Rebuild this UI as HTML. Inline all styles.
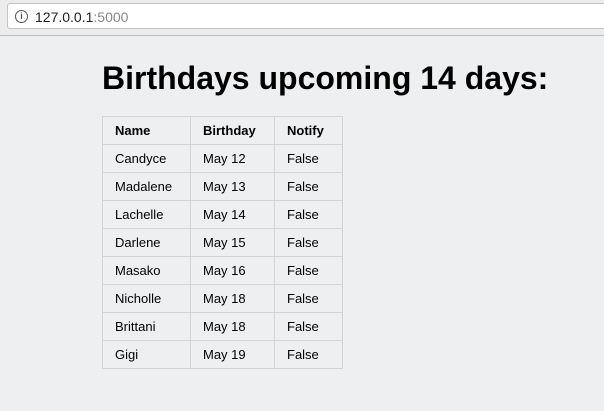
<!DOCTYPE html>
<html><head><style>
body{margin:0;width:604px;height:411px;background:#eeeff1;font-family:"Liberation Sans",Arial,sans-serif;overflow:hidden;position:relative}
.bar{position:absolute;left:0;top:0;width:604px;height:35px;background:#ececec;border-bottom:1px solid #bdbdbd}
.url{position:absolute;left:7px;top:3px;width:620px;height:26px;background:#fff;border:1px solid #c3c3c3;border-radius:3px;box-sizing:border-box}
.url .t{position:absolute;left:27px;top:5px;font-size:14px;color:#222}
.url .t span{color:#888}
.ic{position:absolute;left:7px;top:6px;width:11px;height:11px;border:1.5px solid #555;border-radius:50%;font-size:9px;font-weight:bold;text-align:center;line-height:11px;color:#555}
h1{position:absolute;left:102px;top:60px;margin:0;font-size:32px;font-weight:bold;color:#000}
table{position:absolute;left:102px;top:116px;border-collapse:collapse;font-size:13px}
td,th{border:1px solid #d4d4d4;height:28px;padding:0 0 0 12px;text-align:left;box-sizing:border-box}
th{font-weight:bold}
</style></head><body>
<div class="bar"><div class="url"><div class="ic">i</div><div class="t">127.0.0.1<span>:5000</span></div></div></div>
<h1>Birthdays upcoming 14 days:</h1>
<table>
<tr><th style="width:88px">Name</th><th style="width:84px">Birthday</th><th style="width:68px">Notify</th></tr>
<tr><td>Candyce</td><td>May 12</td><td>False</td></tr>
<tr><td>Madalene</td><td>May 13</td><td>False</td></tr>
<tr><td>Lachelle</td><td>May 14</td><td>False</td></tr>
<tr><td>Darlene</td><td>May 15</td><td>False</td></tr>
<tr><td>Masako</td><td>May 16</td><td>False</td></tr>
<tr><td>Nicholle</td><td>May 18</td><td>False</td></tr>
<tr><td>Brittani</td><td>May 18</td><td>False</td></tr>
<tr><td>Gigi</td><td>May 19</td><td>False</td></tr>
</table>
</body></html>
